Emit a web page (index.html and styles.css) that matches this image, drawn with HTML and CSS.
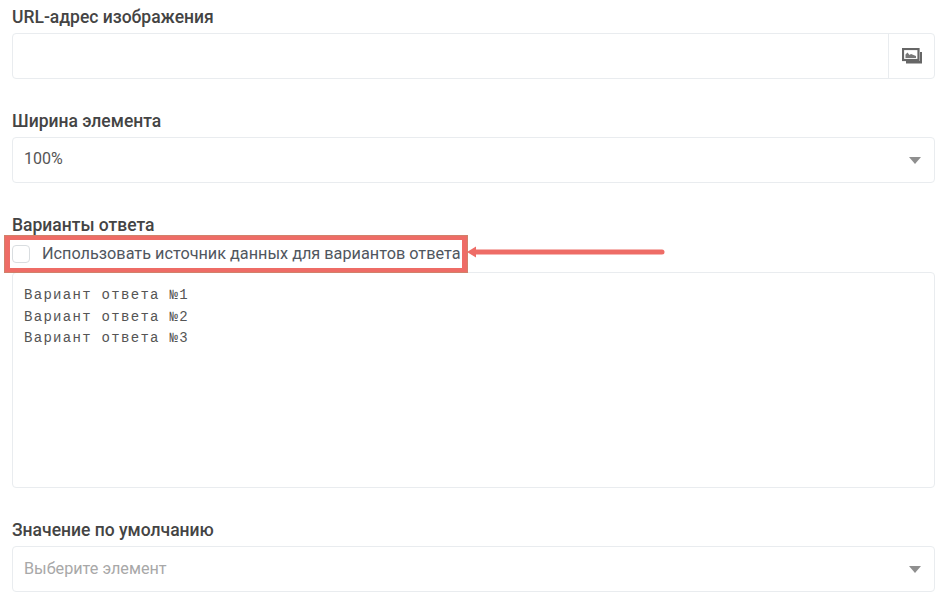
FILE: index.html
```html
<!DOCTYPE html>
<html lang="en">
<head>
  <meta charset="UTF-8" />
  <title>Настройки элемента</title>
  <link rel="stylesheet" href="styles.css">
</head>
<body>
  <main class="form">
    <section class="group">
      <label class="label">URL-адрес изображения</label>
      <div class="field">
        <div class="field-value"></div>
        <div class="addon">
          <svg width="20" height="16" viewBox="0 0 20 16">
            <path d="M4 13V15.5H20V4H18V13Z" fill="#666"/>
            <rect x="1" y="1" width="15.5" height="11" fill="#fff" stroke="#666" stroke-width="2.2"/>
            <path d="M3.5 6.5L5.5 4.5L7.5 7L9 6L14 8V10H3.5Z" fill="#777"/>
          </svg>
        </div>
      </div>
    </section>

    <section class="group">
      <label class="label">Ширина элемента</label>
      <div class="field">
        <div class="field-value">100%</div>
        <span class="caret"></span>
      </div>
    </section>

    <section class="group group-choices">
      <label class="label">Варианты ответа</label>
      <div class="check-row">
        <span class="checkbox"></span>
        <span>Использовать источник данных для вариантов ответа</span>
      </div>
      <div class="choices">Вариант ответа №1
Вариант ответа №2
Вариант ответа №3</div>
      <!-- annotation over the screenshot -->
      <div class="mark-box"></div>
      <svg class="mark-arrow" width="200" height="14" viewBox="0 0 200 14">
        <path d="M10 7H196" stroke="#ee6c66" stroke-width="5" stroke-linecap="round"/>
        <path d="M1 7L10 1.5V12.5Z" fill="#ee6c66"/>
      </svg>
    </section>

    <section class="group">
      <label class="label">Значение по умолчанию</label>
      <div class="field">
        <div class="field-value placeholder">Выберите элемент</div>
        <span class="caret"></span>
      </div>
    </section>
  </main>
</body>
</html>
```

FILE: styles.css
```css
body {
  margin: 0;
  background: #fff;
  font-family: Roboto, "Liberation Sans", sans-serif;
  color: #4a4a4a;
}

.form {
  padding: 7px 5px 0 12px;
}

.group {
  margin-bottom: 32px;
}

.group-choices {
  position: relative;
}

.label {
  display: block;
  height: 20px;
  margin-bottom: 6px;
  font-size: 17.5px;
  font-weight: 500;
  line-height: 20px;
  color: #444;
}

.field {
  display: flex;
  align-items: center;
  height: 44px;
  border: 1px solid #e9ecef;
  border-radius: 4px;
  position: relative;
}

.field-value {
  flex: 1;
  padding: 0 11px;
  font-size: 16px;
  line-height: 20px;
  margin-top: -2px;
  color: #555;
}

.placeholder {
  margin-top: 0;
  font-size: 16.2px;
  color: #a8a8a8;
}

.addon {
  display: flex;
  align-items: center;
  justify-content: center;
  width: 45px;
  height: 100%;
  border-left: 1px solid #e9ecef;
}

.caret {
  margin-right: 13px;
  border-left: 6.5px solid transparent;
  border-right: 6.5px solid transparent;
  border-top: 7px solid #8f8f8f;
}

.check-row {
  display: flex;
  align-items: center;
  height: 28px;
  margin-top: -1px;
  font-size: 16.25px;
  line-height: 28px;
  color: #50565e;
}

.checkbox {
  width: 16px;
  height: 16px;
  margin-right: 12px;
  border: 1px solid #d9dde0;
  border-radius: 4px;
}

.choices {
  margin-top: 4px;
  padding: 12px 11px 11px;
  height: 191px;
  border: 1px solid #e9ecef;
  border-radius: 4px;
  font-family: "Liberation Mono", monospace;
  font-size: 14px;
  letter-spacing: 1.3px;
  line-height: 21.5px;
  white-space: pre;
  color: #555;
}

.mark-box {
  position: absolute;
  left: -8px;
  top: 20px;
  width: 452px;
  height: 28px;
  border: 6px solid #ee6c66;
  border-top-width: 5px;
  border-bottom-width: 5px;
  outline: 1px solid rgba(180, 150, 110, 0.5);
  outline-offset: -1px;
}

.mark-arrow {
  position: absolute;
  left: 454px;
  top: 30px;
}
```
